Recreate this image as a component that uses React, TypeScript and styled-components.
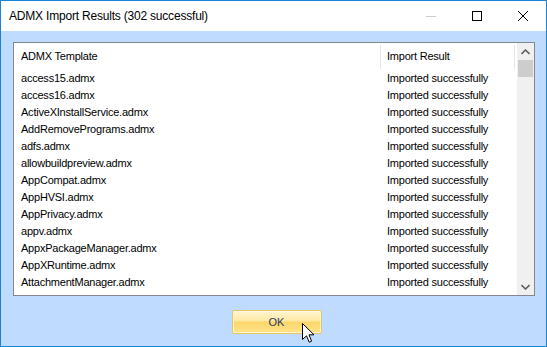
import React from "react";
import styled, { createGlobalStyle } from "styled-components";

const Global = createGlobalStyle`
  html, body { margin: 0; padding: 0; background: #ffffff; }
  body { font-family: "Liberation Sans", Arial, sans-serif; }
`;

const Window = styled.div`
  position: relative;
  width: 547px;
  height: 347px;
  box-sizing: border-box;
  border: 1px solid #1883d7;
  display: flex;
  flex-direction: column;
  background: #bfdbff;
  overflow: hidden;
`;

const TitleBar = styled.div`
  height: 30px;
  flex: none;
  background: #ffffff;
  display: flex;
  align-items: center;
`;

const Title = styled.div`
  flex: 1;
  padding-left: 8px;
  font-family: "Liberation Sans", Arial, sans-serif;
  font-size: 12px;
  letter-spacing: -0.2px;
  color: #000000;
  padding-bottom: 1px;
`;

const CaptionButton = styled.div`
  width: 46px;
  height: 30px;
  display: flex;
  align-items: center;
  justify-content: center;
`;

const Client = styled.div`
  flex: 1;
  display: flex;
  flex-direction: column;
  align-items: center;
  padding: 11px 11px 0 12px;
`;

const ListBox = styled.div`
  width: 522px;
  height: 254px;
  box-sizing: border-box;
  border: 1px solid #828790;
  background: #ffffff;
  display: flex;
`;

const ListContent = styled.div`
  flex: 1;
  display: flex;
  flex-direction: column;
  font-family: "Liberation Sans", Arial, sans-serif;
  font-size: 11px;
  letter-spacing: -0.22px;
  color: #000000;
`;

const HeaderRow = styled.div`
  height: 27px;
  display: grid;
  grid-template-columns: 366px 134px 2px;
  align-items: stretch;
`;

const HeaderCell = styled.div<{ $sep?: boolean }>`
  display: flex;
  align-items: center;
  padding-left: ${(p) => (p.$sep ? "6px" : "7px")};
  padding-bottom: 2px;
  border-left: ${(p) => (p.$sep ? "1px solid #e5e5e5" : "none")};
  margin: 2px 0 1px 0;
`;

const HeaderTail = styled.div`
  border-left: 1px solid #e5e5e5;
  margin: 2px 0 1px 0;
`;

const Row = styled.div`
  height: 17px;
  display: grid;
  grid-template-columns: 366px 134px;
  align-items: center;
`;

const Cell = styled.div`
  padding-left: 7px;
  white-space: nowrap;
  line-height: 17px;
`;

const ScrollBar = styled.div`
  width: 17px;
  flex: none;
  background: #f0f0f0;
  display: flex;
  flex-direction: column;
`;

const ScrollArrow = styled.div`
  height: 17px;
  display: flex;
  align-items: center;
  justify-content: center;
`;

const ScrollTrack = styled.div`
  flex: 1;
  display: flex;
  flex-direction: column;
  align-items: center;
`;

const Thumb = styled.div`
  width: 15px;
  height: 17px;
  background: #cdcdcd;
`;

const ButtonArea = styled.div`
  padding-top: 14px;
  display: flex;
  justify-content: center;
  width: 100%;
`;

const OkButton = styled.div`
  width: 90px;
  height: 24px;
  box-sizing: border-box;
  border: 1px solid #e6c46a;
  border-radius: 2px;
  background: linear-gradient(
    to bottom,
    #fff6d2 0%,
    #fde9a2 45%,
    #fcd76a 50%,
    #fde38a 100%
  );
  box-shadow: inset 0 0 0 1px rgba(255, 250, 225, 0.8);
  display: flex;
  align-items: center;
  justify-content: center;
  font-family: "Liberation Sans", Arial, sans-serif;
  font-size: 11px;
  color: #2a3a5e;
  margin-left: 5px;
`;

const Cursor = styled.svg`
  position: absolute;
  left: 301px;
  top: 322px;
`;

const rows = [
  "access15.admx",
  "access16.admx",
  "ActiveXInstallService.admx",
  "AddRemovePrograms.admx",
  "adfs.admx",
  "allowbuildpreview.admx",
  "AppCompat.admx",
  "AppHVSI.admx",
  "AppPrivacy.admx",
  "appv.admx",
  "AppxPackageManager.admx",
  "AppXRuntime.admx",
  "AttachmentManager.admx",
];

export default function App() {
  return (
    <>
      <Global />
      <Window>
        <TitleBar>
          <Title>ADMX Import Results (302 successful)</Title>
          <CaptionButton>
            <svg width="10" height="10" viewBox="0 0 10 10">
              <line x1="0" y1="5.5" x2="10" y2="5.5" stroke="#cccccc" strokeWidth="1" />
            </svg>
          </CaptionButton>
          <CaptionButton>
            <svg width="10" height="10" viewBox="0 0 10 10">
              <rect x="0.5" y="0.5" width="9" height="9" fill="none" stroke="#000" strokeWidth="1" />
            </svg>
          </CaptionButton>
          <CaptionButton>
            <svg width="10" height="10" viewBox="0 0 10 10">
              <path d="M0 0 L10 10 M10 0 L0 10" stroke="#000" strokeWidth="1" />
            </svg>
          </CaptionButton>
        </TitleBar>
        <Client>
          <ListBox>
            <ListContent>
              <HeaderRow>
                <HeaderCell>ADMX Template</HeaderCell>
                <HeaderCell $sep>Import Result</HeaderCell>
                <HeaderTail />
              </HeaderRow>
              {rows.map((r) => (
                <Row key={r}>
                  <Cell>{r}</Cell>
                  <Cell>Imported successfully</Cell>
                </Row>
              ))}
            </ListContent>
            <ScrollBar>
              <ScrollArrow>
                <svg width="9" height="6" viewBox="0 0 9 6">
                  <path d="M0.5 5 L4.5 1 L8.5 5" fill="none" stroke="#606060" strokeWidth="1.6" />
                </svg>
              </ScrollArrow>
              <ScrollTrack>
                <Thumb />
              </ScrollTrack>
              <ScrollArrow>
                <svg width="9" height="6" viewBox="0 0 9 6">
                  <path d="M0.5 1 L4.5 5 L8.5 1" fill="none" stroke="#606060" strokeWidth="1.6" />
                </svg>
              </ScrollArrow>
            </ScrollBar>
          </ListBox>
          <ButtonArea>
            <OkButton>OK</OkButton>
          </ButtonArea>
        </Client>
        <Cursor width="13" height="21" viewBox="0 0 13 21">
          <path
            d="M0.5 0.5 L0.5 16.5 L4.5 12.8 L7.2 19.2 L9.6 18.2 L7 11.8 L12 11.8 Z"
            fill="#ffffff"
            stroke="#000000"
            strokeWidth="1"
            strokeLinejoin="miter"
          />
        </Cursor>
      </Window>
    </>
  );
}
